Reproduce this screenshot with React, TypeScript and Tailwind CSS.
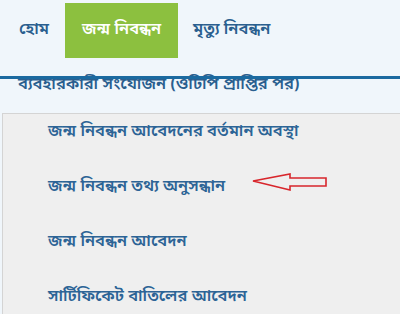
import React from 'react';

const bn = { fontFamily: '"Noto Sans Bengali", "Noto Sans", "Lohit Bengali", sans-serif' };

const items = [
  'জন্ম নিবন্ধন আবেদনের বর্তমান অবস্থা',
  'জন্ম নিবন্ধন তথ্য অনুসন্ধান',
  'জন্ম নিবন্ধন আবেদন',
  'সার্টিফিকেট বাতিলের আবেদন',
];

const App = () => {
  return (
    <div className="relative w-[400px] h-[314px] overflow-hidden bg-[#f0f6fb]" style={bn}>
      {/* Top nav */}
      <div className="flex items-start h-[76px] pt-[3px] text-[16.5px] font-semibold text-[#2a5f8f]">
        <div className="ml-[19px] h-[55px] flex items-center">হোম</div>
        <div className="ml-[16px] w-[113px] h-[55px] bg-[#8cc03f] text-white flex items-center justify-center">
          জন্ম নিবন্ধন
        </div>
        <div className="ml-[15px] h-[55px] flex items-center">মৃত্যু নিবন্ধন</div>
      </div>

      <div className="relative z-10 h-[3px] bg-[#1b6aa0]" />
      <div className="pl-[18px] -mt-[7px] h-[41px] text-[16.5px] font-semibold text-[#2a5f8f] leading-[26px] whitespace-nowrap">
        ব্যবহারকারী সংযোজন (ওটিপি প্রাপ্তির পর)
      </div>

      {/* Dropdown panel */}
      <div className="ml-[2px] h-[220px] border-l border-t border-[#d4d4d4] bg-[#efefef] flex flex-col gap-[19px]">
        {items.map((t) => (
          <div key={t} className="h-[36px] pl-[45px] flex items-center text-[16.5px] font-semibold text-[#2c6496] whitespace-nowrap">
            {t}
          </div>
        ))}
      </div>

      {/* Red annotation arrow */}
      <svg className="absolute left-[250px] top-[171px]" width="80" height="22" viewBox="0 0 80 22">
        <polygon
          points="3,10 40,3 40,7 76,7 76,15 40,15 40,19"
          fill="none"
          stroke="#d8262c"
          strokeWidth="1.6"
          strokeLinejoin="miter"
        />
      </svg>
    </div>
  );
};

export default App;
